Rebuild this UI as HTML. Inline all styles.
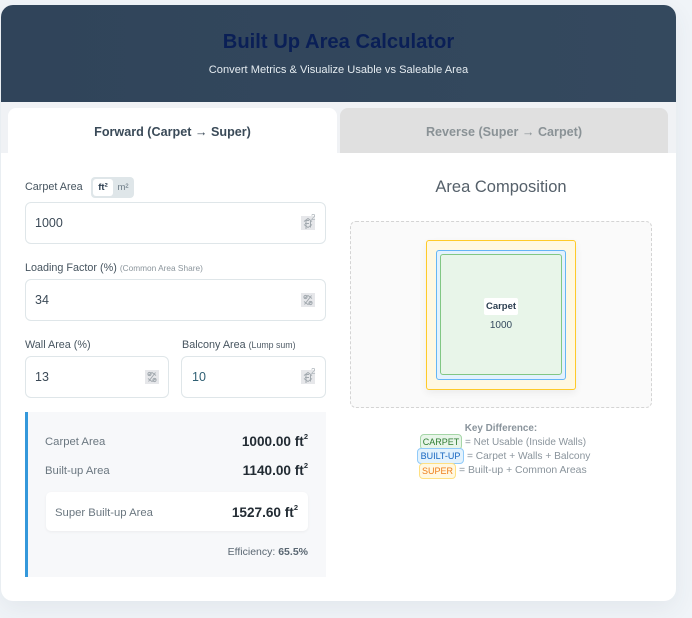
<!DOCTYPE html>
<html>
<head>
<meta charset="utf-8">
<style>
html,body{margin:0;padding:0;width:692px;height:618px;overflow:hidden;background:#f0f4f8;font-family:"Liberation Sans",sans-serif;color:#34495e}
.a{position:absolute;white-space:nowrap;box-sizing:border-box}
.c{text-align:center}
.r{text-align:right}
.lab{font-size:10.8px;color:#46545f;line-height:14px}
.inp{position:absolute;box-sizing:border-box;background:#fff;border:1px solid #dfe6e9;border-radius:6px;height:42px}
.val{font-size:12.5px;color:#3c4a57;line-height:16px}
.spin{position:absolute;width:14px;height:14px;background:#e6e7ea}
.spin svg{position:absolute;left:0;top:0}
.rl{font-size:11.3px;color:#6b7780;line-height:14px}
.rv{font-size:13.6px;font-weight:bold;color:#222b33;line-height:16px}
sup{font-size:7.5px;line-height:0;vertical-align:7px}
.tag{position:absolute;box-sizing:border-box;height:16px;border-radius:4px;font-size:9px;line-height:15px;text-align:center;border:1px solid}
.kt{font-size:10px;color:#8a949c;line-height:14px}
</style>
</head>
<body>
<div class="a" style="left:1px;top:5px;width:675px;height:596px;border-radius:12px;background:#fff;box-shadow:0 8px 24px rgba(50,70,90,.07)"></div>
<div class="a" style="left:1px;top:5px;width:675px;height:97px;border-radius:12px 12px 0 0;background:linear-gradient(90deg,#30445a,#34495e)"></div>
<div class="a c" style="left:1px;top:29px;width:675px;font-size:20.2px;font-weight:bold;line-height:26px;color:#0a1f56">Built Up Area Calculator</div>
<div class="a c" style="left:1px;top:63px;width:675px;font-size:11.1px;line-height:14px;color:#e4ebf0">Convert Metrics &amp; Visualize Usable vs Saleable Area</div>

<div class="a" style="left:1px;top:102px;width:675px;height:51px;background:#f0f2f5"></div>
<div class="a" style="left:8px;top:108px;width:329px;height:45px;background:#fff;border-radius:8px 8px 0 0"></div>
<div class="a" style="left:340px;top:108px;width:328px;height:45px;background:#e0e0e0;border-radius:8px 8px 0 0"></div>
<div class="a c" style="left:8px;top:124px;width:329px;font-size:12.6px;font-weight:bold;line-height:17px;color:#3a4a58">Forward (Carpet → Super)</div>
<div class="a c" style="left:340px;top:124px;width:328px;font-size:12.6px;font-weight:bold;line-height:17px;color:#8a9296">Reverse (Super → Carpet)</div>

<div class="a lab" style="left:25px;top:180px">Carpet Area</div>
<div class="a" style="left:91px;top:177px;width:43px;height:21px;background:#dfe6e9;border-radius:4px"></div>
<div class="a c" style="left:93px;top:179px;width:20px;height:17px;background:#fff;border-radius:3px;font-size:9.5px;font-weight:bold;line-height:17px;color:#2c3e50">ft²</div>
<div class="a c" style="left:113px;top:179px;width:20px;height:17px;font-size:9.5px;line-height:17px;color:#6d7b86">m²</div>
<div class="inp" style="left:25px;top:202px;width:301px"></div>
<div class="a val" style="left:35px;top:215px">1000</div>
<div class="spin" style="left:301px;top:216px"><svg width="14" height="14" viewBox="0 0 14 14" fill="none" stroke="#a2a9af" stroke-width="1"><path d="M3 5.5 7 2.5l4 3M3 8.5l4 3 4-3"/><path d="M5 13V4.5h3M4 7.5h4M9.5 5v6.5"/></svg></div>
<div class="a" style="left:311px;top:213px;font-size:8px;line-height:10px;color:#a8b0b6">2</div>

<div class="a lab" style="left:25px;top:261px">Loading Factor (%) <span style="font-size:8.3px;color:#8b959c">(Common Area Share)</span></div>
<div class="inp" style="left:25px;top:279px;width:301px"></div>
<div class="a val" style="left:35px;top:292px">34</div>
<div class="spin" style="left:301px;top:293px"><svg width="14" height="14" viewBox="0 0 14 14" fill="none" stroke="#a2a9af" stroke-width="1"><path d="M3 5.5 7 2.5l4 3M3 8.5l4 3 4-3"/><path d="M10.5 2.5 3.5 11.5"/><circle cx="4.5" cy="4" r="1.6"/><circle cx="9.5" cy="10" r="1.6"/></svg></div>

<div class="a lab" style="left:25px;top:338px">Wall Area (%)</div>
<div class="a lab" style="left:182px;top:338px">Balcony Area <span style="font-size:8.8px;color:#4f5b66">(Lump sum)</span></div>
<div class="inp" style="left:25px;top:356px;width:144px"></div>
<div class="a val" style="left:35px;top:369px">13</div>
<div class="spin" style="left:145px;top:370px"><svg width="14" height="14" viewBox="0 0 14 14" fill="none" stroke="#a2a9af" stroke-width="1"><path d="M3 5.5 7 2.5l4 3M3 8.5l4 3 4-3"/><path d="M10.5 2.5 3.5 11.5"/><circle cx="4.5" cy="4" r="1.6"/><circle cx="9.5" cy="10" r="1.6"/></svg></div>
<div class="inp" style="left:181px;top:356px;width:145px"></div>
<div class="a val" style="left:192px;top:369px;color:#2f5f73">10</div>
<div class="spin" style="left:301px;top:370px"><svg width="14" height="14" viewBox="0 0 14 14" fill="none" stroke="#a2a9af" stroke-width="1"><path d="M3 5.5 7 2.5l4 3M3 8.5l4 3 4-3"/><path d="M5 13V4.5h3M4 7.5h4M9.5 5v6.5"/></svg></div>
<div class="a" style="left:311px;top:367px;font-size:8px;line-height:10px;color:#a8b0b6">2</div>

<div class="a" style="left:25px;top:412px;width:301px;height:165px;background:#f7f8fa;border-left:3px solid #3498db"></div>
<div class="a rl" style="left:45px;top:435px">Carpet Area</div>
<div class="a rv r" style="left:180px;top:434px;width:128px">1000.00 ft<sup>2</sup></div>
<div class="a rl" style="left:45px;top:464px">Built-up Area</div>
<div class="a rv r" style="left:180px;top:463px;width:128px">1140.00 ft<sup>2</sup></div>
<div class="a" style="left:46px;top:492px;width:262px;height:39px;background:#fff;border-radius:5px;box-shadow:0 1px 3px rgba(0,0,0,.05)"></div>
<div class="a rl" style="left:55px;top:506px">Super Built-up Area</div>
<div class="a rv r" style="left:170px;top:505px;width:128px">1527.60 ft<sup>2</sup></div>
<div class="a r" style="left:180px;top:545px;width:128px;font-size:10.5px;line-height:14px;color:#5a6772">Efficiency: <b>65.5%</b></div>

<div class="a c" style="left:350px;top:177px;width:302px;font-size:16.5px;line-height:20px;color:#55606a">Area Composition</div>
<div class="a" style="left:350px;top:221px;width:302px;height:187px;background:#fafafa;border:1px dashed #d4d4d4;border-radius:6px"></div>
<div class="a" style="left:426px;top:240px;width:150px;height:150px;background:#fff8e1;border:1px solid #ffca28;border-radius:3px;box-shadow:0 3px 8px rgba(0,0,0,.06)"></div>
<div class="a" style="left:436px;top:250px;width:130px;height:130px;background:#e3f2fd;border:1px solid #64b5f6;border-radius:3px"></div>
<div class="a" style="left:440px;top:254px;width:122px;height:121px;background:#e8f5e9;border:1px solid #81c784;border-radius:3px"></div>
<div class="a c" style="left:484px;top:298px;width:34px;height:17px;background:#fff;border-radius:2px;font-size:9.5px;font-weight:bold;line-height:18px;color:#2c3e50">Carpet</div>
<div class="a c" style="left:440px;top:319px;width:122px;font-size:10px;line-height:14px;color:#34495e">1000</div>

<div class="a c" style="left:350px;top:422px;width:302px;font-size:9.9px;font-weight:bold;line-height:14px;color:#8a949c">Key Difference:</div>
<div class="tag" style="left:420px;top:434px;width:42px;background:#e8f5e9;border-color:#a5d6a7;color:#2e7d32">CARPET</div>
<div class="a kt" style="left:465px;top:436px">= Net Usable (Inside Walls)</div>
<div class="tag" style="left:417px;top:448px;width:47px;background:#e3f2fd;border-color:#90caf9;color:#1565c0">BUILT-UP</div>
<div class="a kt" style="left:467px;top:450px;font-size:10.2px">= Carpet + Walls + Balcony</div>
<div class="tag" style="left:419px;top:463px;width:37px;background:#fff8e1;border-color:#ffe082;color:#ef7d1a">SUPER</div>
<div class="a kt" style="left:459px;top:464px;font-size:10.4px">= Built-up + Common Areas</div>
</body>
</html>
